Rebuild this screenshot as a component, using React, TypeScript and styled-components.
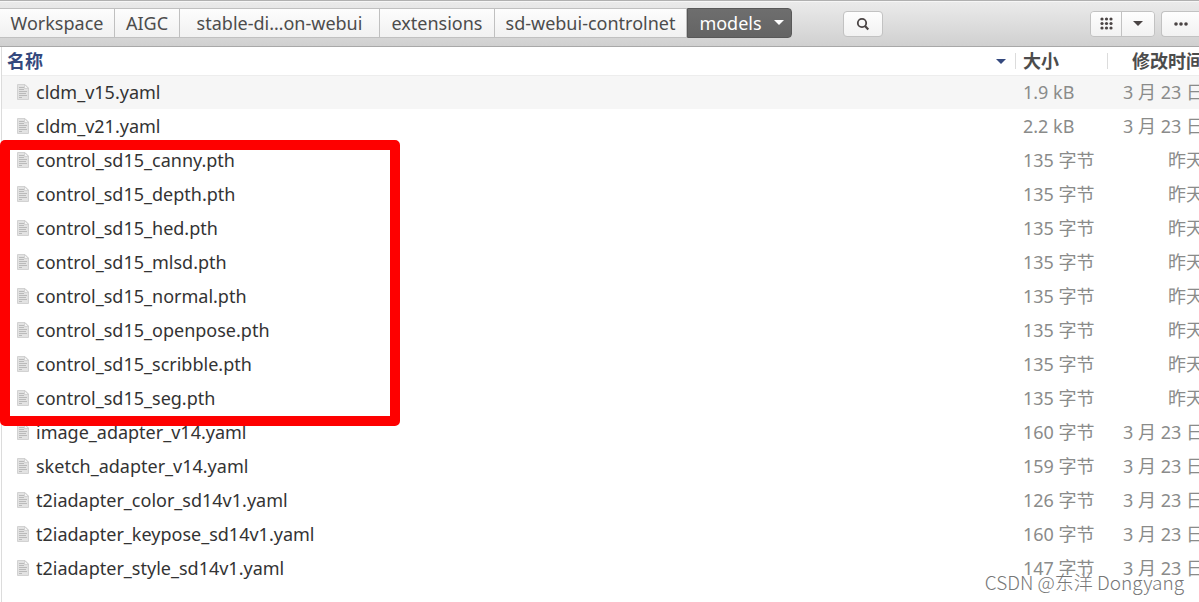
import React from "react";
import styled, { createGlobalStyle } from "styled-components";

const GlobalStyle = createGlobalStyle`
  *, *::before, *::after { box-sizing: border-box; }
  body { margin: 0; background: #fff; }
  button { font: inherit; margin: 0; cursor: pointer; }
  body, button, table { font-family: "Noto Sans", "Noto Sans CJK SC", sans-serif; }
`;

const Window = styled.main`
  position: relative;
  min-height: 100vh;
  overflow: hidden;
  background: #fff;
`;

const Toolbar = styled.header`
  display: flex;
  align-items: center;
  height: 47px;
  border-top: 1px solid #b0b0b0;
  border-bottom: 1px solid #a8a8a8;
  background: linear-gradient(#ebebeb, #d0d0d0);
  box-shadow: inset 0 1px #f6f6f6;
`;

const PathBar = styled.nav`
  display: flex;
  flex: none;
  padding-bottom: 2px;
`;

const PathButton = styled.button<{ $width: number; $current?: boolean }>`
  display: flex;
  align-items: center;
  justify-content: center;
  gap: 12px;
  width: ${(p) => p.$width}px;
  height: 30px;
  padding: ${(p) => (p.$current ? "0 0 0 4px" : "0")};
  white-space: nowrap;
  font-size: 18px;
  line-height: 28px;
  color: ${(p) => (p.$current ? "#fff" : "#4c4c4c")};
  border: solid ${(p) => (p.$current ? "#585858" : "#c0c0c0")};
  border-width: ${(p) => (p.$current ? "1px" : "1px 1px 1px 0")};
  border-radius: ${(p) => (p.$current ? "0 4px 4px 0" : "0")};
  background: ${(p) => (p.$current ? "linear-gradient(#6e6e6e, #646464)" : "linear-gradient(#fdfdfd, #f1f1f1)")};
`;

const SearchButton = styled.button`
  display: grid;
  place-items: center;
  width: 40px;
  height: 26px;
  margin-left: 51px;
  padding: 0;
  border: 1px solid #c2c2c2;
  border-radius: 4px;
  background: linear-gradient(#fefefe, #f2f2f2);
`;

const Actions = styled.div`
  display: flex;
  gap: 6px;
  margin-left: auto;
`;

const ButtonGroup = styled.div`
  display: flex;
  height: 26px;
  overflow: hidden;
  border: 1px solid #c2c2c2;
  border-radius: 4px;
`;

const GroupButton = styled.button<{ $width: number }>`
  display: grid;
  place-items: center;
  width: ${(p) => p.$width}px;
  padding: 0;
  border: 0;
  background: linear-gradient(#fefefe, #f2f2f2);
  & + & { border-left: 1px solid #c2c2c2; }
`;

const MenuButton = styled.button`
  display: grid;
  place-items: center;
  width: 38px;
  height: 26px;
  padding: 0;
  border: solid #c2c2c2;
  border-width: 1px 0 1px 1px;
  border-radius: 4px 0 0 4px;
  background: linear-gradient(#fefefe, #f2f2f2);
`;

const FilePane = styled.section`
  min-height: calc(100vh - 47px);
  margin-left: 1px;
  border-left: 1px solid #dcdcdc;
  overflow: hidden;
`;

/* The last column runs past the right edge of the pane. */
const FileTable = styled.table`
  width: calc(100% + 9px);
  table-layout: fixed;
  border-collapse: separate;
  border-spacing: 0;
  font-size: 18px;
`;

const HeadCell = styled.th<{ $sorted?: boolean; $width?: number; $end?: boolean }>`
  width: ${(p) => (p.$width ? `${p.$width}px` : "auto")};
  height: 28px;
  padding: ${(p) => (p.$sorted ? "0 9px 0 5px" : p.$end ? "0 4px 0 0" : "0")};
  text-align: ${(p) => (p.$end ? "right" : "left")};
  line-height: 24px;
  font-weight: 700;
  color: ${(p) => (p.$sorted ? "#34497e" : "#4c4c4c")};
  white-space: nowrap;
`;

const HeadContent = styled.div<{ $end?: boolean; $ruled?: boolean }>`
  display: flex;
  align-items: center;
  justify-content: ${(p) => (p.$end ? "flex-end" : "space-between")};
  height: 16px;
  padding-left: ${(p) => (p.$ruled ? "7px" : "0")};
  border-left: ${(p) => (p.$ruled ? "1px solid #dcdcdc" : "0")};
`;

const Row = styled.tr`
  height: 34px;
  color: #333;
  &:first-child {
    background: #f6f6f6;
    box-shadow: inset 0 1px #ededed;
  }
`;

const Cell = styled.td<{ $muted?: boolean; $end?: boolean }>`
  padding: ${(p) => (p.$end ? "0 4px 0 0" : p.$muted ? "0 0 0 8px" : "0 0 0 14px")};
  text-align: ${(p) => (p.$end ? "right" : "left")};
  line-height: 24px;
  color: ${(p) => (p.$muted ? "#8a8b8a" : "inherit")};
  white-space: nowrap;
`;

const FileName = styled.span`
  display: flex;
  align-items: center;
  gap: 6px;
`;

const Highlight = styled.div`
  position: absolute;
  top: 140px;
  left: 0;
  width: 400px;
  height: 286px;
  border: 10px solid #fe0000;
  border-radius: 5px;
  pointer-events: none;
`;

const Watermark = styled.div`
  position: absolute;
  right: 15px;
  bottom: 6px;
  font-family: "Noto Sans CJK SC", sans-serif;
  font-size: 19px;
  line-height: 28px;
  font-weight: 300;
  color: #777;
  text-shadow: 1px 1px #fff, -1px -1px #fff;
  pointer-events: none;
`;

const Triangle = ({ color }: { color: string }) => (
  <svg width="10" height="5" viewBox="0 0 10 5" aria-hidden="true">
    <path d="M0 0H10L5 5Z" fill={color} />
  </svg>
);

const FileIcon = () => (
  <svg width="14" height="18" viewBox="0 0 14 18" aria-hidden="true">
    <path d="M1.5 1.5H9L12.5 5V16.5H1.5Z" fill="#e2e2e2" stroke="#d2d2d2" />
    <path d="M8.5 1.5V5.5H12.5Z" fill="#f4f4f4" stroke="#c8c8c8" strokeWidth=".7" />
    <path d="M3 4.5H8M3 6.5H8M3 8.5H11M3 10.5H10M3 12.5H11M3 14.5H6" stroke="#bababa" />
  </svg>
);

const crumbs = [
  { label: "Workspace", width: 115 },
  { label: "AIGC", width: 65 },
  { label: "stable-di…on-webui", width: 200 },
  { label: "extensions", width: 115 },
  { label: "sd-webui-controlnet", width: 192 },
];

const files = [
  ["cldm_v15.yaml", "1.9 kB", "3 月 23 日"],
  ["cldm_v21.yaml", "2.2 kB", "3 月 23 日"],
  ["control_sd15_canny.pth", "135 字节", "昨天"],
  ["control_sd15_depth.pth", "135 字节", "昨天"],
  ["control_sd15_hed.pth", "135 字节", "昨天"],
  ["control_sd15_mlsd.pth", "135 字节", "昨天"],
  ["control_sd15_normal.pth", "135 字节", "昨天"],
  ["control_sd15_openpose.pth", "135 字节", "昨天"],
  ["control_sd15_scribble.pth", "135 字节", "昨天"],
  ["control_sd15_seg.pth", "135 字节", "昨天"],
  ["image_adapter_v14.yaml", "160 字节", "3 月 23 日"],
  ["sketch_adapter_v14.yaml", "159 字节", "3 月 23 日"],
  ["t2iadapter_color_sd14v1.yaml", "126 字节", "3 月 23 日"],
  ["t2iadapter_keypose_sd14v1.yaml", "160 字节", "3 月 23 日"],
  ["t2iadapter_style_sd14v1.yaml", "147 字节", "3 月 23 日"],
];

export default function App() {
  return (
    <>
      <GlobalStyle />
      <Window>
        <Toolbar>
          <PathBar aria-label="Path">
            {crumbs.map((c) => (
              <PathButton key={c.label} $width={c.width}>{c.label}</PathButton>
            ))}
            <PathButton $width={105} $current>
              models
              <Triangle color="#fff" />
            </PathButton>
          </PathBar>
          <SearchButton aria-label="Search">
            <svg width="14" height="14" viewBox="0 0 14 14" fill="none" stroke="#4a4444" aria-hidden="true">
              <circle cx="6" cy="6" r="4.2" strokeWidth="1.8" />
              <path d="M8.8 8.8L12.3 12.5" strokeWidth="2.2" />
            </svg>
          </SearchButton>
          <Actions>
            <ButtonGroup>
              <GroupButton $width={30} aria-label="Icon view">
                <svg width="13" height="13" viewBox="0 0 13 13" fill="#4a4444" aria-hidden="true">
                  {[2, 6.5, 11].map((y) => [2, 6.5, 11].map((x) => <circle key={`${x}-${y}`} cx={x} cy={y} r="1.6" />))}
                </svg>
              </GroupButton>
              <GroupButton $width={33} aria-label="View options">
                <Triangle color="#4a4444" />
              </GroupButton>
            </ButtonGroup>
            <MenuButton aria-label="Menu">
              <svg width="14" height="4" viewBox="0 0 14 4" fill="#4a4444" aria-hidden="true">
                <circle cx="2" cy="2" r="1.8" />
                <circle cx="7" cy="2" r="1.8" />
                <circle cx="12" cy="2" r="1.8" />
              </svg>
            </MenuButton>
          </Actions>
        </Toolbar>
        <FilePane>
          <FileTable>
            <thead>
              <tr>
                <HeadCell $sorted scope="col" aria-sort="ascending">
                  <HeadContent>名称<Triangle color="#34497e" /></HeadContent>
                </HeadCell>
                <HeadCell $width={92} scope="col"><HeadContent $ruled>大小</HeadContent></HeadCell>
                <HeadCell $width={101} $end scope="col"><HeadContent $ruled $end>修改时间</HeadContent></HeadCell>
              </tr>
            </thead>
            <tbody>
              {files.map(([name, size, date]) => (
                <Row key={name}>
                  <Cell><FileName><FileIcon />{name}</FileName></Cell>
                  <Cell $muted>{size}</Cell>
                  <Cell $muted $end>{date}</Cell>
                </Row>
              ))}
            </tbody>
          </FileTable>
        </FilePane>
        <Highlight />
        <Watermark>CSDN @东洋 Dongyang</Watermark>
      </Window>
    </>
  );
}
